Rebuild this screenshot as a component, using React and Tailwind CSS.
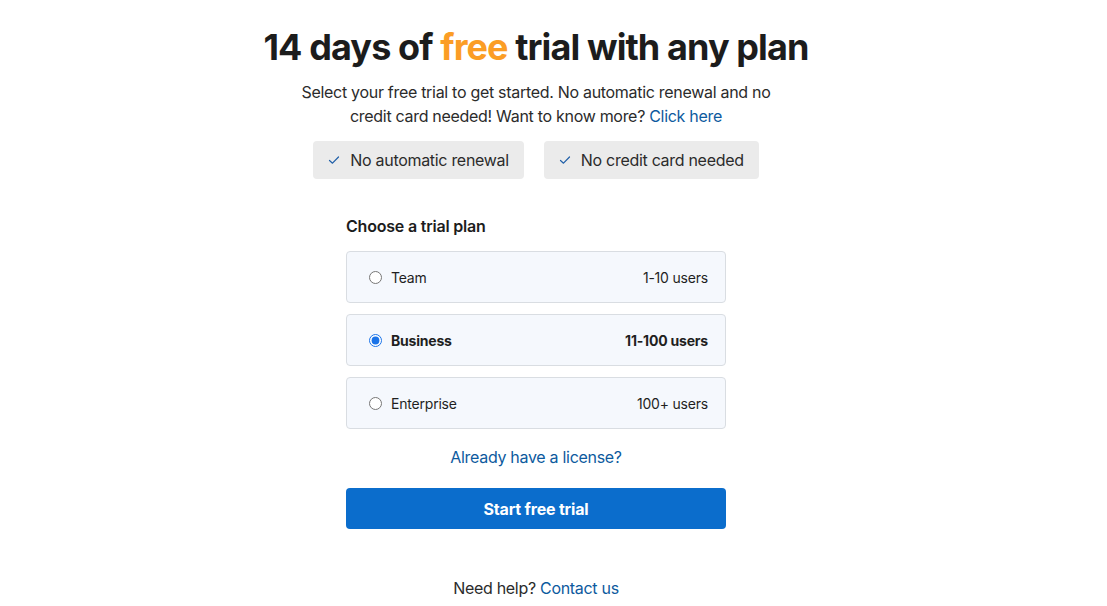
import React, { useState } from "react";

const plans = [
  { id: "team", name: "Team", users: "1-10 users" },
  { id: "business", name: "Business", users: "11-100 users" },
  { id: "enterprise", name: "Enterprise", users: "100+ users" },
];

const Check = () => (
  <svg width="12" height="12" viewBox="0 0 12 12" fill="none" className="text-[#1f5fa8]">
    <path d="M1.5 6.5 L4.5 9.2 L10.5 3" stroke="currentColor" strokeWidth="1.2" strokeLinecap="round" strokeLinejoin="round" />
  </svg>
);

export default function App() {
  const [selected, setSelected] = useState("business");

  return (
    <div
      className="min-h-screen bg-white flex justify-center pr-[35px] text-[#1f1f1f]"
      style={{ fontFamily: "Inter, 'Noto Sans', sans-serif" }}
    >
      <div className="flex flex-col items-center pt-[26px]">
        <h1 className="text-[36px] leading-[42px] font-bold tracking-[-0.9px] text-[#1c1c1c]">
          14 days of <span className="text-[#fb9d25]">free</span> trial with any plan
        </h1>
        <div className="mt-[12px] w-[480px] flex flex-col items-center text-[16px] leading-[24px] tracking-[-0.3px] text-[#2b2b2b]">
          <p>Select your free trial to get started. No automatic renewal and no</p>
          <p>
            credit card needed! Want to know more? <a className="text-[#0d5a9e]">Click here</a>
          </p>
        </div>
        <div className="mt-[13px] flex gap-[20px] tracking-[-0.3px]">
          <div className="flex items-center gap-[10px] h-[38px] px-[15px] rounded-[4px] bg-[#ebebeb] text-[16px] text-[#2b2b2b]">
            <Check />
            No automatic renewal
          </div>
          <div className="flex items-center gap-[10px] h-[38px] px-[15px] rounded-[4px] bg-[#ebebeb] text-[16px] text-[#2b2b2b]">
            <Check />
            No credit card needed
          </div>
        </div>

        <div className="mt-[35px] w-[380px]">
          <h2 className="text-[16px] leading-[24px] font-semibold tracking-[-0.2px] text-[#1c1c1c]">Choose a trial plan</h2>
          <div className="mt-[13px] flex flex-col gap-[11px]">
            {plans.map((p) => {
              const active = selected === p.id;
              return (
                <label
                  key={p.id}
                  className="flex items-center h-[52px] pl-[22px] pr-[17px] rounded-[4px] border border-[#d9dde2] bg-[#f5f8fd] cursor-pointer text-[14px] tracking-[-0.2px] text-[#1f1f1f]"
                >
                  <input
                    type="radio"
                    name="plan"
                    checked={active}
                    onChange={() => setSelected(p.id)}
                    className="w-[13px] h-[13px] m-0 accent-[#1a73e8]"
                  />
                  <span className={"ml-[9px] " + (active ? "font-bold" : "")}>{p.name}</span>
                  <span className={"ml-auto " + (active ? "font-bold" : "")}>{p.users}</span>
                </label>
              );
            })}
          </div>
          <div className="mt-[16px] text-center text-[16px] leading-[24px] tracking-[-0.3px]">
            <a className="text-[#0d5a9e]">Already have a license?</a>
          </div>
          <button className="mt-[19px] w-full h-[41px] rounded-[4px] bg-[#0b6dcc] text-white text-[16px] font-bold tracking-[-0.2px]">
            Start free trial
          </button>
        </div>

        <p className="mt-[47px] text-[16px] leading-[24px] tracking-[-0.3px] text-[#2b2b2b]">
          Need help? <a className="text-[#0d5a9e]">Contact us</a>
        </p>
      </div>
    </div>
  );
}
